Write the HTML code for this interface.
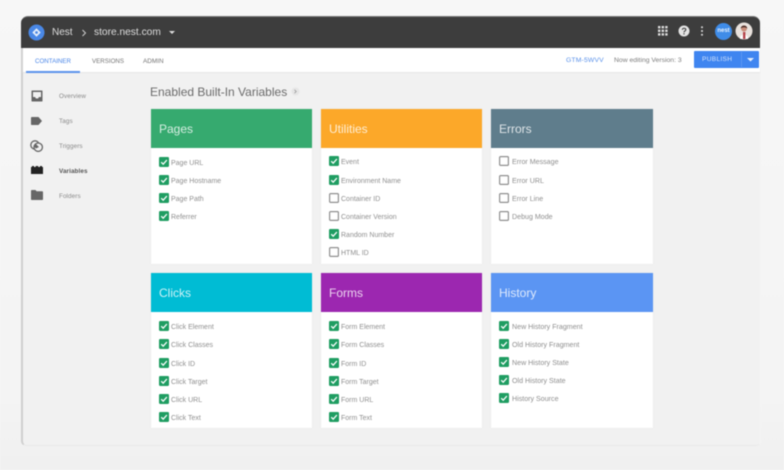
<!DOCTYPE html>
<html><head><meta charset="utf-8">
<style>
*{box-sizing:border-box;margin:0;padding:0}
html,body{width:784px;height:470px;overflow:hidden;background:#f6f6f6}
body{font-family:"Liberation Sans",sans-serif;position:relative}
#s{position:absolute;left:0;top:0;width:784px;height:470px;filter:blur(.6px);background:linear-gradient(180deg,#f7f7f7,#f4f4f4 85%,#f0f0f0)}
#w{position:absolute;left:21px;top:16px;width:740px;height:430px;background:#f1f1f1;border-radius:7px 7px 5px 5px;border-left:2px solid #cfcfcf;border-bottom:1px solid #e9e9e9;border-right:1px solid #f4f4f4;overflow:hidden}
#h{position:absolute;left:21px;top:16px;width:739px;height:32px;background:#3d3d3d;border-radius:7px 7px 0 0;border-top:1px solid #777}
#t{position:absolute;left:23px;top:48px;width:737px;height:24px;background:#fff;box-shadow:0 1px 1px #e6e6e6}
.a{position:absolute;white-space:nowrap}
.tab{font-size:6.2px;color:#757575;top:57.5px}
.nav{font-size:6.3px;color:#8a8a8a;left:59px;letter-spacing:.1px}
.c{position:absolute;width:161px;height:155px;background:#fff;box-shadow:0 0 1px #ddd}
.c b{display:block;height:39px;font-weight:400;font-size:12px;padding:13px 0 0 8px;line-height:15px;color:rgba(255,255,255,.8)}
.i{position:absolute;left:8px;font-size:7px;line-height:13px;color:#8f8f8f;padding-left:12px;white-space:nowrap;height:10px}
.r .i{padding-left:13px;font-size:7.1px}
.i svg{position:absolute;left:0;top:0}
</style></head><body><div id="s">
<div id="w"></div><div id="h"></div><div id="t"></div>

<svg class="a" style="left:28px;top:24px" width="17" height="17" viewBox="0 0 17 17"><circle cx="8.5" cy="8.5" r="8" fill="#4a88e6"/><path d="M8.5 4.3 12.7 8.5 8.5 12.7 4.3 8.5Z" fill="#e8f0fb"/><circle cx="8.5" cy="8.5" r="1.4" fill="#4a88e6"/></svg>
<div class="a" style="left:52px;top:27px;font-size:10px;color:#dedede">Nest</div>
<svg class="a" style="left:81px;top:29px" width="6" height="8" viewBox="0 0 6 8"><path d="M1.5 1 4.5 4 1.5 7" fill="none" stroke="#cfcfcf" stroke-width="1"/></svg>
<div class="a" style="left:94px;top:27px;font-size:10.2px;color:#dedede">store.nest.com</div>
<svg class="a" style="left:169px;top:31px" width="6" height="4"><path d="M0 0H6L3 3Z" fill="#ddd"/></svg>

<svg class="a" style="left:658px;top:26px" width="10" height="10" fill="#ddd"><rect x="0" y="0" width="2.4" height="2.4"/><rect x="3.6" y="0" width="2.4" height="2.4"/><rect x="7.2" y="0" width="2.4" height="2.4"/><rect x="0" y="3.6" width="2.4" height="2.4"/><rect x="3.6" y="3.6" width="2.4" height="2.4"/><rect x="7.2" y="3.6" width="2.4" height="2.4"/><rect x="0" y="7.2" width="2.4" height="2.4"/><rect x="3.6" y="7.2" width="2.4" height="2.4"/><rect x="7.2" y="7.2" width="2.4" height="2.4"/></svg>
<svg class="a" style="left:678px;top:25px" width="12" height="12" viewBox="0 0 12 12"><circle cx="6" cy="6" r="5.5" fill="#e4e4e4"/><path d="M4.3 4.8C4.3 2.7 7.8 2.8 7.8 4.8 7.8 6 6 6 6 7.4" fill="none" stroke="#3d3d3d" stroke-width="1.1"/><rect x="5.4" y="8.2" width="1.2" height="1.2" fill="#3d3d3d"/></svg>
<svg class="a" style="left:700px;top:26px" width="4" height="10" fill="#ddd"><circle cx="2" cy="1.2" r="1"/><circle cx="2" cy="5" r="1"/><circle cx="2" cy="8.8" r="1"/></svg>
<div class="a" style="left:715px;top:23px;width:17px;height:17px;border-radius:50%;background:#3f8ce8;color:#e6f0fc;font-size:6px;text-align:center;line-height:17px;font-weight:700">nest</div>
<svg class="a" style="left:735px;top:22px" width="18" height="18" viewBox="0 0 18 18"><circle cx="9" cy="9" r="8.5" fill="#e9e2dd"/><circle cx="9" cy="6.5" r="3" fill="#c98d7a"/><path d="M5 17C5 11 13 11 13 17Z" fill="#fff"/><path d="M8 10h2.4v7H8Z" fill="#b5434a"/><path d="M5.8 6.5C5.6 2.7 12.4 2.7 12.2 6.5 11 4.8 7 4.8 5.8 6.5Z" fill="#4a2c26"/></svg>

<div class="a tab" style="left:35px;color:#4a86e8">CONTAINER</div>
<div class="a" style="left:26px;top:71px;width:54px;height:2px;background:#5c94ec"></div>
<div class="a tab" style="left:92px">VERSIONS</div>
<div class="a tab" style="left:143px;font-size:6.4px">ADMIN</div>
<div class="a" style="left:566px;top:56.5px;font-size:6.8px;color:#5b92ea;letter-spacing:.15px">GTM-5WVV</div>
<div class="a" style="left:614px;top:56.5px;font-size:6.8px;color:#7d7d7d">Now editing Version: 3</div>
<div class="a" style="left:694px;top:51px;width:65px;height:17px;background:#3f85f0;border-radius:1px"></div>
<div class="a" style="left:702px;top:56px;font-size:6.6px;color:#d5e4fb;letter-spacing:.3px">PUBLISH</div>
<div class="a" style="left:741px;top:52px;width:1px;height:15px;background:#5a97f2"></div>
<svg class="a" style="left:747px;top:58px" width="7" height="4"><path d="M0 0H7L3.5 3.5Z" fill="#e4eefd"/></svg>

<svg class="a" style="left:31px;top:90px" width="12" height="12" viewBox="0 0 12 12"><path d="M1 .5H11A.7.7 0 0 1 11.5 1V11A.7.7 0 0 1 11 11.5H1A.7.7 0 0 1 .5 11V1A.7.7 0 0 1 1 .5Z" fill="#666"/><path d="M2 2H10V7H8L7 8.5H5L4 7H2Z" fill="#f1f1f1"/></svg>
<div class="a nav" style="top:92.5px">Overview</div>
<svg class="a" style="left:31px;top:117px" width="11" height="8" viewBox="0 0 11 8"><path d="M.8 0H7.5L11 4 7.5 8H.8Q0 8 0 7.2V.8Q0 0 .8 0Z" fill="#666"/></svg>
<div class="a nav" style="top:117.5px">Tags</div>
<svg class="a" style="left:30px;top:140px" width="13" height="12" viewBox="0 0 13 12"><circle cx="5" cy="5" r="4.2" fill="none" stroke="#666" stroke-width="1.3"/><circle cx="8.2" cy="7.2" r="4.2" fill="#f1f1f1" stroke="#666" stroke-width="1.3"/><path d="M5.5 3.6 9 7 6 8.5 4.3 6.8Z" fill="#666"/></svg>
<div class="a nav" style="top:142.5px">Triggers</div>
<svg class="a" style="left:31px;top:166px" width="12" height="8" viewBox="0 0 12 8"><path d="M0 1H1V0H3V1H4.7V0H7.2V1H9V0H11V1H12V8H0Z" fill="#222"/></svg>
<div class="a nav" style="top:167.5px;color:#555;font-weight:700">Variables</div>
<svg class="a" style="left:31px;top:190px" width="12" height="10" viewBox="0 0 12 10"><path d="M.8 0H4.5L5.6 1.3H11.2Q12 1.3 12 2.100V9.200Q12 10 11.200 10H.8Q0 10 0 9.200V.8Q0 0 .8 0Z" fill="#666"/></svg>
<div class="a nav" style="top:192.5px">Folders</div>

<div class="a" style="left:150px;top:85px;font-size:12px;color:#6a6a6a">Enabled Built-In Variables</div>
<svg class="a" style="left:291px;top:87px" width="9" height="9" viewBox="0 0 9 9"><circle cx="4.500" cy="4.500" r="4" fill="#e6e6e6"/><path d="M3.500 2.800 5.200 4.500 3.500 6.200" fill="none" stroke="#999" stroke-width=".8"/></svg>

<svg width="0" height="0" style="position:absolute"><defs>
<symbol id="y" viewBox="0 0 10 10"><rect width="10" height="10" rx="1.200" fill="#1f9d62"/><path d="M2.200 5.200 4.200 7.200 7.900 3" fill="none" stroke="#fff" stroke-width="1.300"/></symbol>
<symbol id="n" viewBox="0 0 10 10"><rect x=".6" y=".6" width="8.800" height="8.800" rx="1" fill="#fff" stroke="#8f8f8f" stroke-width="1.200"/></symbol>
</defs></svg>

<div class="c" style="left:151px;top:109px"><b style="background:#36aa6f">Pages</b>
<div class="i" style="top:48px"><svg width="10" height="10"><use href="#y"/></svg>Page URL</div>
<div class="i" style="top:66px"><svg width="10" height="10"><use href="#y"/></svg>Page Hostname</div>
<div class="i" style="top:84px"><svg width="10" height="10"><use href="#y"/></svg>Page Path</div>
<div class="i" style="top:102px"><svg width="10" height="10"><use href="#y"/></svg>Referrer</div>
</div>
<div class="c" style="left:321px;top:109px"><b style="background:#fca829">Utilities</b>
<div class="i" style="top:47px"><svg width="10" height="10"><use href="#y"/></svg>Event</div>
<div class="i" style="top:66px"><svg width="10" height="10"><use href="#y"/></svg>Environment Name</div>
<div class="i" style="top:84px"><svg width="10" height="10"><use href="#n"/></svg>Container ID</div>
<div class="i" style="top:102px"><svg width="10" height="10"><use href="#n"/></svg>Container Version</div>
<div class="i" style="top:120px"><svg width="10" height="10"><use href="#y"/></svg>Random Number</div>
<div class="i" style="top:138px"><svg width="10" height="10"><use href="#n"/></svg>HTML ID</div>
</div>
<div class="c r" style="left:491px;top:109px;width:162px"><b style="background:#5f7d8c">Errors</b>
<div class="i" style="top:47px"><svg width="10" height="10"><use href="#n"/></svg>Error Message</div>
<div class="i" style="top:66px"><svg width="10" height="10"><use href="#n"/></svg>Error URL</div>
<div class="i" style="top:84px"><svg width="10" height="10"><use href="#n"/></svg>Error Line</div>
<div class="i" style="top:102px"><svg width="10" height="10"><use href="#n"/></svg>Debug Mode</div>
</div>
<div class="c" style="left:151px;top:273px"><b style="background:#00bcd4">Clicks</b>
<div class="i" style="top:48px"><svg width="10" height="10"><use href="#y"/></svg>Click Element</div>
<div class="i" style="top:66px"><svg width="10" height="10"><use href="#y"/></svg>Click Classes</div>
<div class="i" style="top:85px"><svg width="10" height="10"><use href="#y"/></svg>Click ID</div>
<div class="i" style="top:103px"><svg width="10" height="10"><use href="#y"/></svg>Click Target</div>
<div class="i" style="top:121px"><svg width="10" height="10"><use href="#y"/></svg>Click URL</div>
<div class="i" style="top:139px"><svg width="10" height="10"><use href="#y"/></svg>Click Text</div>
</div>
<div class="c" style="left:321px;top:273px"><b style="background:#9c27b0">Forms</b>
<div class="i" style="top:48px"><svg width="10" height="10"><use href="#y"/></svg>Form Element</div>
<div class="i" style="top:66px"><svg width="10" height="10"><use href="#y"/></svg>Form Classes</div>
<div class="i" style="top:85px"><svg width="10" height="10"><use href="#y"/></svg>Form ID</div>
<div class="i" style="top:103px"><svg width="10" height="10"><use href="#y"/></svg>Form Target</div>
<div class="i" style="top:121px"><svg width="10" height="10"><use href="#y"/></svg>Form URL</div>
<div class="i" style="top:139px"><svg width="10" height="10"><use href="#y"/></svg>Form Text</div>
</div>
<div class="c r" style="left:491px;top:273px;width:162px"><b style="background:#5b95f3">History</b>
<div class="i" style="top:48px"><svg width="10" height="10"><use href="#y"/></svg>New History Fragment</div>
<div class="i" style="top:66px"><svg width="10" height="10"><use href="#y"/></svg>Old History Fragment</div>
<div class="i" style="top:84px"><svg width="10" height="10"><use href="#y"/></svg>New History State</div>
<div class="i" style="top:102px"><svg width="10" height="10"><use href="#y"/></svg>Old History State</div>
<div class="i" style="top:120px"><svg width="10" height="10"><use href="#y"/></svg>History Source</div>
</div>
</div></body></html>
